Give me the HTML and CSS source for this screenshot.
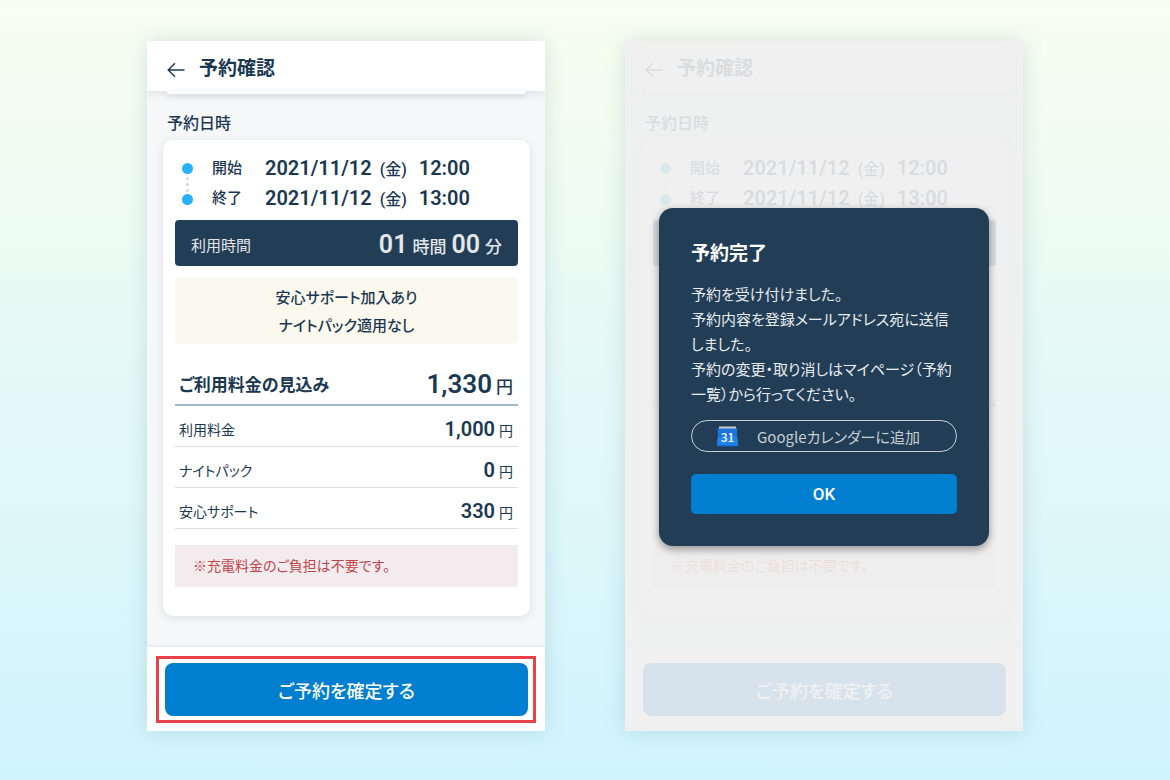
FILE: index.html
```html
<!DOCTYPE html>
<html lang="ja">
<head>
    <meta charset="UTF-8">
    <meta name="viewport" content="width=device-width, initial-scale=1.0">
    <title>予約確認</title>
    <link rel="stylesheet" href="styles.css">
</head>
<body>
    <main class="screens">

        <!-- Confirmation screen -->
        <section class="phone">
            <header class="top-bar">
                <a href="#" class="back" aria-label="戻る">
                    <svg width="18" height="16" viewBox="0 0 18 16" fill="none" stroke="currentColor" stroke-width="1.4">
                        <path d="M17.5 8H1.2M8 1.2L1.2 8L8 14.8"/>
                    </svg>
                </a>
                <h1>予約確認</h1>
            </header>

            <div class="content">
                <div class="previous-card"></div>
                <h2>予約日時</h2>
                <div class="card">
                    <div class="schedule">
                        <div class="timeline">
                            <span class="dot"></span>
                            <span class="line"><i></i><i></i><i></i></span>
                            <span class="dot"></span>
                        </div>
                        <dl>
                            <dt>開始</dt>
                            <dd>2021/11/12 <small>(金)</small> <time>12:00</time></dd>
                            <dt>終了</dt>
                            <dd>2021/11/12 <small>(金)</small> <time>13:00</time></dd>
                        </dl>
                    </div>

                    <div class="duration">
                        <span>利用時間</span>
                        <span class="duration-value"><b>01</b>時間<b>00</b>分</span>
                    </div>

                    <p class="options">安心サポート加入あり<br>ナイトパック適用なし</p>

                    <table class="fees">
                        <thead>
                            <tr><th>ご利用料金の見込み</th><td><b>1,330</b>円</td></tr>
                        </thead>
                        <tbody>
                            <tr><th>利用料金</th><td><b>1,000</b>円</td></tr>
                            <tr><th>ナイトパック</th><td><b>0</b>円</td></tr>
                            <tr><th>安心サポート</th><td><b>330</b>円</td></tr>
                        </tbody>
                    </table>

                    <p class="notice">※充電料金のご負担は不要です。</p>
                </div>
            </div>

            <footer class="bottom-bar">
                <div class="frame highlight">
                    <button type="button" class="confirm">ご予約を確定する</button>
                </div>
            </footer>
        </section>

        <!-- Same screen with the completed dialog on top -->
        <section class="phone">
            <header class="top-bar">
                <a href="#" class="back" aria-label="戻る">
                    <svg width="18" height="16" viewBox="0 0 18 16" fill="none" stroke="currentColor" stroke-width="1.4">
                        <path d="M17.5 8H1.2M8 1.2L1.2 8L8 14.8"/>
                    </svg>
                </a>
                <h1>予約確認</h1>
            </header>

            <div class="content">
                <div class="previous-card"></div>
                <h2>予約日時</h2>
                <div class="card">
                    <div class="schedule">
                        <div class="timeline">
                            <span class="dot"></span>
                            <span class="line"><i></i><i></i><i></i></span>
                            <span class="dot"></span>
                        </div>
                        <dl>
                            <dt>開始</dt>
                            <dd>2021/11/12 <small>(金)</small> <time>12:00</time></dd>
                            <dt>終了</dt>
                            <dd>2021/11/12 <small>(金)</small> <time>13:00</time></dd>
                        </dl>
                    </div>

                    <div class="duration"></div>

                    <p class="options"></p>

                    <table class="fees">
                        <thead>
                            <tr><th></th><td></td></tr>
                        </thead>
                        <tbody>
                            <tr><th></th><td></td></tr>
                            <tr><th></th><td></td></tr>
                            <tr><th></th><td></td></tr>
                        </tbody>
                    </table>

                    <p class="notice">※充電料金のご負担は不要です。</p>
                </div>
            </div>

            <footer class="bottom-bar">
                <div class="frame">
                    <button type="button" class="confirm">ご予約を確定する</button>
                </div>
            </footer>

            <div class="overlay">
                <div class="dialog" role="dialog" aria-labelledby="dialog-title">
                    <h2 id="dialog-title">予約完了</h2>
                    <p>予約を受け付けました。<br>予約内容を登録メールアドレス宛に送信しました。<br>予約の変更・取り消しはマイページ（予約一覧）から行ってください。</p>
                    <button type="button" class="calendar">
                        <svg width="21" height="21" viewBox="0 0 21 21">
                            <path d="M2 0.5h17v3H2z" fill="#c9c9c6"/>
                            <path d="M0.5 2.5h20L20 8l1 9.500H0L1 8z" fill="#1a73dc"/>
                            <path d="M1 11h19l1 9H0z" fill="#1e82ee"/>
                            <path d="M0 19.500h21v1H0z" fill="#1461bd"/>
                            <text x="10.500" y="16" text-anchor="middle">31</text>
                        </svg>
                        <span>Googleカレンダーに追加</span>
                    </button>
                    <button type="button" class="ok">OK</button>
                </div>
            </div>
        </section>

    </main>
</body>
</html>
```

FILE: styles.css
```css
* {
    box-sizing: border-box;
    margin: 0;
    padding: 0;
}
body {
    min-height: 100vh;
    padding: 41px 20px 49px;
    font-family: Roboto, "Noto Sans CJK JP", sans-serif;
    font-feature-settings: "palt";
    color: #1b3852;
    background: linear-gradient(#f8feef, #d0f4fe);
}
button {
    font: inherit;
    font-feature-settings: inherit;
    cursor: pointer;
    border: none;
}
.screens {
    display: grid;
    grid-template-columns: 1fr 1fr;
    gap: 80px;
    max-width: 876px;
    margin: 0 auto;
}
.phone {
    position: relative;
    display: flex;
    flex-direction: column;
    overflow: hidden;
    background-color: #f6f7f9;
    box-shadow: 0 0 20px rgba(40, 90, 110, 0.16);
}

/* Header */
.top-bar {
    position: relative;
    display: flex;
    align-items: center;
    gap: 14px;
    height: 50px;
    padding: 5px 20px 0;
    background-color: #fff;
    box-shadow: 0 2px 8px rgba(30, 50, 90, 0.12);
}
.back {
    display: flex;
    padding-top: 2px;
    color: #1b3852;
}
h1 {
    font-size: 19px;
    line-height: 26px;
    font-weight: 600;
}

/* Reservation card */
.content {
    flex: 1;
    padding: 0 15px 31px 16px;
}
.previous-card {
    position: relative;
    height: 3px;
    margin: 0 4px;
    border-radius: 0 0 10px 10px;
    background-color: #fff;
    box-shadow: 0 2px 6px rgba(30, 50, 90, 0.2);
}
.content h2 {
    padding: 18px 4px 4px;
    font-size: 16px;
    line-height: 24px;
    font-weight: 500;
}
.card {
    padding: 13px 12px 29px;
    border-radius: 10px;
    background-color: #fff;
    box-shadow: 0 2px 8px rgba(30, 50, 90, 0.12);
}
.schedule {
    display: flex;
    gap: 19px;
    padding: 0 7px 7px;
}
.timeline {
    display: flex;
    flex-direction: column;
    align-items: center;
    justify-content: space-between;
    padding: 10px 0 8px;
}
.dot {
    width: 11px;
    height: 11px;
    border-radius: 50%;
    background-color: #26b1fa;
}
.line {
    display: flex;
    flex-direction: column;
    gap: 3px;
}
.line i {
    width: 3px;
    height: 3px;
    border-radius: 50%;
    background-color: #d3d6dc;
}
dl {
    display: grid;
    grid-template-columns: 53px 1fr;
    grid-auto-rows: 30px;
    align-items: center;
    line-height: 30px;
    font-weight: 500;
}
dt {
    font-size: 15px;
    line-height: 28px;
}
dd {
    display: flex;
    align-items: baseline;
    font-size: 20px;
    font-weight: 600;
}
dd small {
    margin: 0 12px 0 8px;
    font-size: 16px;
    line-height: 20px;
    font-weight: 500;
}
.duration {
    display: flex;
    align-items: center;
    justify-content: space-between;
    height: 46px;
    padding: 2px 16px 0;
    border-radius: 4px;
    font-size: 15px;
    color: #e4e6e8;
    background-color: #223e57;
}
.duration-value {
    display: flex;
    align-items: baseline;
    gap: 5px;
    font-size: 17px;
    font-weight: 500;
}
.duration-value b {
    font-size: 25px;
    font-weight: 600;
}
.options {
    height: 67px;
    margin: 11px 0 19px;
    padding: 7px 0;
    border-radius: 4px;
    font-size: 15px;
    line-height: 28px;
    font-weight: 500;
    text-align: center;
    background-color: #fbf9ee;
}

/* Fees */
.fees {
    width: 100%;
    border-spacing: 0;
}
.fees th,
.fees td {
    height: 41px;
    padding-top: 6px;
    border-bottom: 1px solid #dcdee1;
    font-size: 14px;
}
.fees th {
    padding-left: 4px;
    text-align: left;
    font-weight: 400;
}
.fees td {
    padding-right: 5px;
    text-align: right;
}
.fees td b {
    margin-right: 4px;
    font-size: 20px;
    font-weight: 600;
}
.fees thead th,
.fees thead td {
    height: 43px;
    padding-top: 0;
    border-bottom: 2px solid #9db7cc;
    font-size: 17px;
}
.fees thead th {
    font-weight: 600;
}
.fees thead td {
    font-weight: 500;
}
.fees thead td b {
    font-size: 26px;
}
.notice {
    margin-top: 16px;
    padding: 9px 18px;
    font-size: 14px;
    line-height: 24px;
    color: #c0444a;
    background-color: #f3ecef;
}

/* Bottom button */
.bottom-bar {
    padding: 9px 9px 8px;
    background-color: #fff;
    box-shadow: 0 0 4px rgba(30, 50, 90, 0.15);
}
.frame {
    padding: 4px 5px 4px 6px;
    border: 3px solid transparent;
}
.highlight {
    border-color: #e9404a;
}
.confirm {
    display: block;
    width: 100%;
    height: 53px;
    border-radius: 8px;
    font-size: 18px;
    font-weight: 500;
    color: #fff;
    background-color: #007ecf;
}

/* Dialog */
.overlay {
    position: absolute;
    inset: 0;
    display: flex;
    align-items: center;
    justify-content: center;
    padding: 0 34px 18px;
    background-color: rgba(238, 238, 238, 0.9);
}
.dialog {
    width: 100%;
    padding: 32px;
    border-radius: 14px;
    color: #e9ecef;
    background-color: #223e57;
    box-shadow: 0 3px 8px rgba(0, 0, 0, 0.4);
}
.dialog h2 {
    font-size: 19px;
    line-height: 28px;
    font-weight: 700;
    color: #fff;
}
.dialog p {
    margin: 15px 0 12px;
    font-size: 15px;
    line-height: 25px;
}
.calendar {
    display: flex;
    align-items: center;
    gap: 19px;
    width: 100%;
    height: 32px;
    padding: 0 25px;
    border: 1px solid #c8cdd1;
    border-radius: 16px;
    font-family: "Noto Sans CJK JP", sans-serif;
    font-size: 15px;
    color: #c8cdd1;
    background-color: transparent;
}
.calendar text {
    font-size: 12px;
    font-weight: 500;
    fill: #fff;
}
.ok {
    display: block;
    width: 100%;
    height: 40px;
    margin-top: 22px;
    border-radius: 5px;
    font-size: 17px;
    font-weight: 500;
    color: #fff;
    background-color: #007ecf;
}
```
